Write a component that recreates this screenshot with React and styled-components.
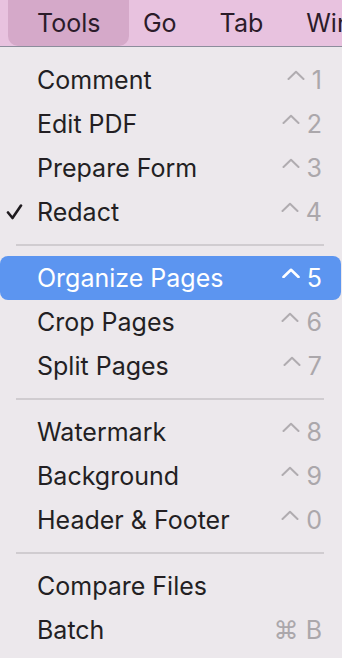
import React from 'react';
import styled, { createGlobalStyle } from 'styled-components';

const GlobalStyle = createGlobalStyle`
    html, body {
        margin: 0;
        padding: 0;
        background: #ece8ec;
        font-family: Inter, "Noto Sans", "Liberation Sans", sans-serif;
    }
`

const Screen = styled.div`
    width: 342px;
    height: 658px;
    overflow: hidden;
    background: #ece8ec;
`

const MenuBar = styled.div`
    display: flex;
    align-items: stretch;
    height: 46px;
    padding-left: 16px;
    background: #e8c2df;
    border-bottom: 1px solid #8c8d9c;
    position: relative;
    white-space: nowrap;
    overflow: hidden;

    &:after {
        content: '';
        position: absolute;
        left: 0;
        bottom: -1px;
        width: 207px;
        height: 1px;
        background: #7a3d4c;
    }
`

const BarTitle = styled.div`
    display: flex;
    align-items: center;
    padding: 0 ${props => props.active ? '29px' : '21.5px'};
    margin: 0 ${props => props.active ? '-8px' : '0'};
    background: ${props => props.active ? '#d5a9c9' : 'transparent'};
    border-radius: 0 0 10px 10px;
    font-size: 25px;
    color: #2b1b29;
`

const Menu = styled.div`
    padding-top: 11px;
`

const Row = styled.div`
    display: flex;
    align-items: center;
    height: 44px;
    margin-right: 1px;
    padding: 0 19px 0 37px;
    position: relative;
    border-radius: 8px;
    background: ${props => props.active ? '#5c95f0' : 'transparent'};
    color: ${props => props.active ? '#ffffff' : '#231f23'};
    font-size: 25px;
`

const Label = styled.span`
    flex: 1;
`

const Check = styled.svg`
    position: absolute;
    left: 6px;
    top: 14px;
`

const Shortcut = styled.span`
    display: flex;
    align-items: center;
    gap: 7px;
    color: ${props => props.active ? '#ffffff' : '#aba7ab'};
`

const Caret = styled.svg`
    margin-bottom: 10px;
`

const Separator = styled.div`
    height: 22px;
    display: flex;
    align-items: center;
    padding: 0 18px 0 16px;

    &:before {
        content: '';
        flex: 1;
        height: 1.5px;
        background: #d0ccd0;
    }
`

const groups = [
    [
        ['Comment', '1'],
        ['Edit PDF', '2'],
        ['Prepare Form', '3'],
        ['Redact', '4', 'checked'],
    ],
    [
        ['Organize Pages', '5', 'active'],
        ['Crop Pages', '6'],
        ['Split Pages', '7'],
    ],
    [
        ['Watermark', '8'],
        ['Background', '9'],
        ['Header & Footer', '0'],
    ],
    [
        ['Compare Files'],
        ['Batch', 'B', 'cmd'],
    ],
]

const CaretIcon = ({ active }) => (
    <Caret width="18" height="10" viewBox="0 0 18 10">
        <path d="M1.5 9 L9 1.8 L16.5 9" fill="none"
            stroke={active ? '#ffffff' : '#b0acb0'}
            strokeWidth={active ? 2.6 : 2} strokeLinecap="round" strokeLinejoin="round" />
    </Caret>
)

const MenuRow = ({ label, keyName, flag }) => {
    const active = flag === 'active';
    return (
        <Row active={active}>
            {flag === 'checked' && (
                <Check width="17" height="16" viewBox="0 0 17 16">
                    <path d="M2 8.5 L6.5 14 L15 1.5" fill="none" stroke="#1f1b1f"
                        strokeWidth="2.6" strokeLinecap="round" strokeLinejoin="round" />
                </Check>
            )}
            <Label>{label}</Label>
            {keyName && (
                <Shortcut active={active}>
                    {flag === 'cmd' ? <span>⌘</span> : <CaretIcon active={active} />}
                    <span>{keyName}</span>
                </Shortcut>
            )}
        </Row>
    )
}

const App = () => (
    <Screen>
        <GlobalStyle />
        <MenuBar>
            <BarTitle active>Tools</BarTitle>
            <BarTitle>Go</BarTitle>
            <BarTitle>Tab</BarTitle>
            <BarTitle>Window</BarTitle>
        </MenuBar>
        <Menu>
            {groups.map((group, i) => (
                <React.Fragment key={i}>
                    {i > 0 && <Separator />}
                    {group.map(([label, keyName, flag]) => (
                        <MenuRow key={label} label={label} keyName={keyName} flag={flag} />
                    ))}
                </React.Fragment>
            ))}
        </Menu>
    </Screen>
);

export default App;
